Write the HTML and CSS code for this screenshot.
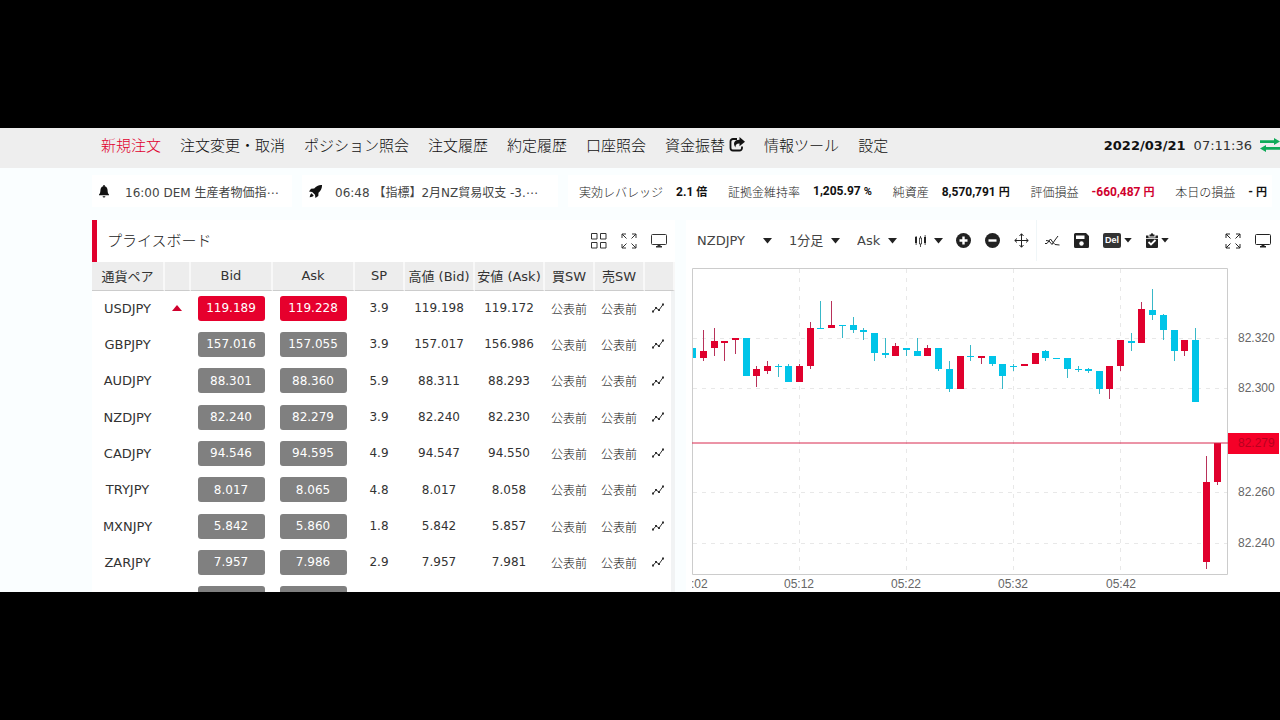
FILE: index.html
```
<!DOCTYPE html>
<html lang="ja">
  <head>
    <meta charset="UTF-8">
    <meta name="viewport" content="width=device-width, initial-scale=1.0">
    <title>プライスボード</title>
    <link rel="stylesheet" href="styles.css">
  </head>
  <body>
    <!-- shared icons -->
    <svg class="sprite" aria-hidden="true">
      <symbol id="caret" viewBox="0 0 9 6"><path d="M0 0h9L4.500 5.500z"/></symbol>
      <symbol id="spark" viewBox="0 0 12 10">
        <path d="M1 8.500L4 5l3 2 4-5.500" fill="none" stroke="currentColor"/>
        <path d="M0 7.500h2v2H0zM3 4h2v2H3zM6 6h2v2H6zM10 .5h2v2h-2z"/>
      </symbol>
      <symbol id="expand" viewBox="0 0 16 16">
        <path d="M1 5V1h4M1 1l4.500 4.500M11 1h4v4M15 1l-4.500 4.500M1 11v4h4M1 15l4.500-4.500M15 11v4h-4M15 15l-4.500-4.500" fill="none" stroke="currentColor"/>
      </symbol>
      <symbol id="monitor" viewBox="0 0 16 14">
        <rect x=".5" y=".5" width="15" height="10" rx="1" fill="none" stroke="currentColor"/>
        <path d="M6.500 11h3v1H11v1.500H5V12h1.500z"/>
      </symbol>
    </svg>

    <header class="topbar">
      <nav class="menu">
        <a class="active" href="#">新規注文</a>
        <a href="#">注文変更・取消</a>
        <a href="#">ポジション照会</a>
        <a href="#">注文履歴</a>
        <a href="#">約定履歴</a>
        <a href="#">口座照会</a>
        <a href="#">資金振替
          <svg width="16" height="15" viewBox="0 0 16 15" aria-hidden="true">
            <path d="M8 2H4a2.500 2.500 0 0 0-2.500 2.500v6.500A2.500 2.500 0 0 0 4 13.500h6.500A2.500 2.500 0 0 0 13 11V9.500" fill="none" stroke="currentColor" stroke-width="1.800"/>
            <path d="M10.500 0L16 4.700l-5.500 4.600V6.600C7.500 6.500 6.500 7.700 6.400 10.500 3.500 6 5.500 2.800 10.500 2.800z"/>
          </svg>
        </a>
        <a href="#">情報ツール</a>
        <a href="#">設定</a>
      </nav>
      <div class="clock">
        <b>2022/03/21</b>
        <span>07:11:36</span>
        <svg class="sync" width="20" height="14" viewBox="0 0 20 14" aria-hidden="true">
          <path d="M0 2.200h14V0l6 3.500L14 7V5H0zM20 9H6V7l-6 3.500L6 14v-2.200h14z"/>
        </svg>
      </div>
    </header>

    <div class="info">
      <a class="news" href="#">
        <svg width="10" height="13" viewBox="0 0 10 13" aria-hidden="true">
          <path d="M4.300 0h1.400v1.200C7.800 1.600 8.500 3.200 8.600 5.500c.1 2 .4 3 1.400 4V10.300H0V9.500c1-1 1.300-2 1.400-4C1.500 3.200 2.200 1.600 4.300 1.200zM3.600 11.200h2.800a1.400 1.400 0 0 1-2.800 0z"/>
        </svg>
        16:00 DEM 生産者物価指⋯
      </a>
      <a class="news news-wide" href="#">
        <svg width="13" height="13" viewBox="0 0 13 13" aria-hidden="true">
          <path d="M13 0c.1 3.500-1 5.500-3.500 7.800L9.300 11 6.400 13 6 9.800 3.200 7 0 6.600 2 3.700l3.200-.2C7.500 1 9.500-.1 13 0zM2.500 8.300l2.200 2.200C4 11.500 2.500 12 .7 12.300 1 10.500 1.500 9 2.500 8.300z"/>
        </svg>
        06:48 【指標】2月NZ貿易収支 -3.⋯
      </a>
      <dl class="account">
        <div><dt>実効レバレッジ</dt><dd>2.1 <small>倍</small></dd></div>
        <div><dt>証拠金維持率</dt><dd>1,205.97 <small>%</small></dd></div>
        <div><dt>純資産</dt><dd>8,570,791 <small>円</small></dd></div>
        <div><dt>評価損益</dt><dd class="loss">-660,487 <small>円</small></dd></div>
        <div><dt>本日の損益</dt><dd>- <small>円</small></dd></div>
      </dl>
    </div>

    <main class="panels">
      <section class="panel board">
        <div class="panel-head">
          <h1>プライスボード</h1>
          <button type="button" aria-label="タイル表示">
            <svg class="line" width="16" height="16" viewBox="0 0 16 16">
              <path d="M.5.5h5.500v5.500H.5zM9.500.5H15v5.500H9.500zM.5 9.500h5.500V15H.5zM9.500 9.500H15V15H9.500z"/>
            </svg>
          </button>
          <button type="button" aria-label="拡大"><svg width="16" height="16"><use href="#expand"/></svg></button>
          <button type="button" aria-label="別画面"><svg width="16" height="14"><use href="#monitor"/></svg></button>
        </div>
        <table class="prices">
          <colgroup>
            <col class="c-pair"><col class="c-arrow"><col class="c-rate"><col class="c-rate"><col class="c-swap">
            <col class="c-high"><col class="c-high"><col class="c-swap"><col class="c-swap"><col class="c-menu">
          </colgroup>
          <thead>
            <tr>
              <th>通貨ペア</th><th></th><th>Bid</th><th>Ask</th><th>SP</th>
              <th>高値 (Bid)</th><th>安値 (Ask)</th><th>買SW</th><th>売SW</th><th></th>
            </tr>
          </thead>
          <tbody>
            <tr class="up">
              <td class="pair">USDJPY</td><td><svg class="arrow" width="10" height="6" viewBox="0 0 10 6"><path d="M5 0l5 6H0z"/></svg></td>
              <td><button type="button" class="rate">119.189</button></td><td><button type="button" class="rate">119.228</button></td>
              <td>3.9</td><td>119.198</td><td>119.172</td><td class="ja">公表前</td><td class="ja">公表前</td>
              <td><svg width="12" height="10"><use href="#spark"/></svg></td>
            </tr>
            <tr>
              <td class="pair">GBPJPY</td><td></td>
              <td><button type="button" class="rate">157.016</button></td><td><button type="button" class="rate">157.055</button></td>
              <td>3.9</td><td>157.017</td><td>156.986</td><td class="ja">公表前</td><td class="ja">公表前</td>
              <td><svg width="12" height="10"><use href="#spark"/></svg></td>
            </tr>
            <tr>
              <td class="pair">AUDJPY</td><td></td>
              <td><button type="button" class="rate">88.301</button></td><td><button type="button" class="rate">88.360</button></td>
              <td>5.9</td><td>88.311</td><td>88.293</td><td class="ja">公表前</td><td class="ja">公表前</td>
              <td><svg width="12" height="10"><use href="#spark"/></svg></td>
            </tr>
            <tr>
              <td class="pair">NZDJPY</td><td></td>
              <td><button type="button" class="rate">82.240</button></td><td><button type="button" class="rate">82.279</button></td>
              <td>3.9</td><td>82.240</td><td>82.230</td><td class="ja">公表前</td><td class="ja">公表前</td>
              <td><svg width="12" height="10"><use href="#spark"/></svg></td>
            </tr>
            <tr>
              <td class="pair">CADJPY</td><td></td>
              <td><button type="button" class="rate">94.546</button></td><td><button type="button" class="rate">94.595</button></td>
              <td>4.9</td><td>94.547</td><td>94.550</td><td class="ja">公表前</td><td class="ja">公表前</td>
              <td><svg width="12" height="10"><use href="#spark"/></svg></td>
            </tr>
            <tr>
              <td class="pair">TRYJPY</td><td></td>
              <td><button type="button" class="rate">8.017</button></td><td><button type="button" class="rate">8.065</button></td>
              <td>4.8</td><td>8.017</td><td>8.058</td><td class="ja">公表前</td><td class="ja">公表前</td>
              <td><svg width="12" height="10"><use href="#spark"/></svg></td>
            </tr>
            <tr>
              <td class="pair">MXNJPY</td><td></td>
              <td><button type="button" class="rate">5.842</button></td><td><button type="button" class="rate">5.860</button></td>
              <td>1.8</td><td>5.842</td><td>5.857</td><td class="ja">公表前</td><td class="ja">公表前</td>
              <td><svg width="12" height="10"><use href="#spark"/></svg></td>
            </tr>
            <tr>
              <td class="pair">ZARJPY</td><td></td>
              <td><button type="button" class="rate">7.957</button></td><td><button type="button" class="rate">7.986</button></td>
              <td>2.9</td><td>7.957</td><td>7.981</td><td class="ja">公表前</td><td class="ja">公表前</td>
              <td><svg width="12" height="10"><use href="#spark"/></svg></td>
            </tr>
            <tr>
              <td></td><td></td>
              <td><button type="button" class="rate"></button></td><td><button type="button" class="rate"></button></td>
              <td></td><td></td><td></td><td></td><td></td><td></td>
            </tr>
          </tbody>
        </table>
      </section>

      <section class="panel chart">
        <div class="toolbar">
          <div class="tools tools-left">
            <label class="drop drop-pair"><select aria-label="通貨ペア"><option>NZDJPY</option></select><svg width="9" height="6"><use href="#caret"/></svg></label>
            <label class="drop"><select aria-label="足種"><option>1分足</option></select><svg width="9" height="6"><use href="#caret"/></svg></label>
            <label class="drop"><select aria-label="価格"><option>Ask</option></select><svg width="9" height="6"><use href="#caret"/></svg></label>
            <button type="button" aria-label="チャート種類">
              <svg width="13" height="12" viewBox="0 0 13 12">
                <path d="M1 2h2v6H1zM10 2h2v6h-2zM1.700 1h.8v9h-.8zM10.700 0h.8v10h-.8z"/>
                <path d="M6.500 1v2M6.500 9v3M5.500 3h2v6h-2z" fill="none" stroke="currentColor" stroke-width=".8"/>
              </svg>
              <svg width="9" height="6"><use href="#caret"/></svg>
            </button>
          </div>
          <div class="tools">
            <button type="button" aria-label="拡大">
              <svg width="15" height="15" viewBox="0 0 15 15"><circle cx="7.500" cy="7.500" r="7.500"/><path d="M7.500 3.500v8M3.500 7.500h8" stroke="#fff" stroke-width="2.400"/></svg>
            </button>
            <button type="button" aria-label="縮小">
              <svg width="15" height="15" viewBox="0 0 15 15"><circle cx="7.500" cy="7.500" r="7.500"/><path d="M3.500 7.500h8" stroke="#fff" stroke-width="2.400"/></svg>
            </button>
            <button type="button" aria-label="十字カーソル">
              <svg class="line" width="15" height="15" viewBox="0 0 15 15"><path d="M7.500 1v13M1 7.500h13M5.500 3l2-2.300 2 2.300M5.500 12l2 2.300 2-2.300M3 5.500L.7 7.500 3 9.500M12 5.500l2.300 2-2.300 2"/></svg>
            </button>
          </div>
          <div class="tools tools-edit">
            <button type="button" aria-label="テクニカル">
              <svg class="line" width="15" height="12" viewBox="0 0 15 12"><path d="M0 8.500h2L5.500 4 8 7.500 10 9.500 14.500 10M1 5.500l3 .5 3 3.500L10 5l3-4"/></svg>
            </button>
            <button type="button" aria-label="保存">
              <svg width="15" height="15" viewBox="0 0 15 15"><path d="M1.500 0H12l3 3v10.500A1.500 1.500 0 0 1 13.500 15h-12A1.500 1.500 0 0 1 0 13.500v-12A1.500 1.500 0 0 1 1.500 0z"/><path d="M2 2.500h8.500v3.500H2z" fill="#fff"/><circle cx="7.500" cy="10.500" r="2.200" fill="#fff"/></svg>
            </button>
            <button type="button">
              <span class="del">Del</span>
              <svg width="8" height="5"><use href="#caret"/></svg>
            </button>
            <button type="button" aria-label="設定">
              <svg width="12" height="15" viewBox="0 0 12 15"><path d="M0 2.500h2.500v2h7v-2H12V14a1 1 0 0 1-1 1H1a1 1 0 0 1-1-1zM3.500 1.500h1.300a1.200 1.200 0 0 1 2.400 0h1.300v2h-5z"/><path d="M0 5.500h12" stroke="#fff" stroke-width=".8"/><path d="M2.500 9l2.500 2.500L9.500 7" fill="none" stroke="#fff" stroke-width="1.800"/></svg>
              <svg width="8" height="5"><use href="#caret"/></svg>
            </button>
          </div>
          <div class="tools tools-right">
            <button type="button" aria-label="拡大"><svg width="16" height="16"><use href="#expand"/></svg></button>
            <button type="button" aria-label="別画面"><svg width="16" height="14"><use href="#monitor"/></svg></button>
          </div>
        </div>

        <svg class="plot" viewBox="0 0 588 324" role="img" aria-label="NZDJPY 1分足">
          <path class="grid" d="M107.500 1v305M214.500 1v305M321.500 1v305M428.500 1v305M1 70.500h534M1 120.500h534M1 224.500h534M1 275.500h534"/>
          <path class="frame" d="M.5.5h535v306H.5z"/>

          <g class="fall">
            <path d="M54.500 70v38M86.500 96v13M96.500 96v18M128.500 33v28M150.500 57v13M161.500 49v16M171.500 60v12M182.500 65v28M193.500 70v20M214.500 80v8M225.500 70v18M246.500 80v23M257.500 93v31M278.500 77v16M300.500 88v10M310.500 96v25M321.500 96v7M353.500 82v11M375.500 90v20M386.500 98v6M396.500 100v5M407.500 103v23M439.500 65v18M460.500 21v31M471.500 46v26M482.500 62v31M503.500 60v74"/>
            <path class="body" d="M1 80h3v10h-3zM51 70h7v38h-7zM83 98h7v1h-7zM93 98h7v16h-7zM125 60h7v1h-7zM147 57h7v1h-7zM158 57h7v5h-7zM168 62h7v2h-7zM179 65h7v20h-7zM190 85h7v2h-7zM211 80h7v2h-7zM222 83h7v5h-7zM243 80h7v21h-7zM254 101h7v20h-7zM275 88h7v1h-7zM297 88h7v8h-7zM307 96h7v12h-7zM318 98h7v1h-7zM350 83h7v7h-7zM361 90h7v1h-7zM372 90h7v11h-7zM383 101h7v1h-7zM393 101h7v2h-7zM404 103h7v18h-7zM436 73h7v2h-7zM457 42h7v5h-7zM468 47h7v15h-7zM479 62h7v21h-7zM500 72h7v62h-7z"/>
          </g>
          <g class="rise">
            <path d="M11.500 62v31M22.500 60v28M32.500 73v20M43.500 70v16M64.500 98v21M75.500 93v13M107.500 96v18M118.500 54v47M139.500 33v27M203.500 75v13M235.500 77v11M268.500 88v33M289.500 88v8M417.500 98v33M428.500 72v31M449.500 34v41M492.500 72v16M514.500 188v113M525.500 175v42"/>
            <path class="body" d="M8 83h7v7h-7zM19 73h7v7h-7zM29 73h7v2h-7zM40 70h7v2h-7zM61 101h7v7h-7zM72 98h7v5h-7zM104 98h7v16h-7zM115 60h7v38h-7zM136 57h7v3h-7zM200 78h7v10h-7zM232 80h7v8h-7zM265 88h7v33h-7zM286 88h7v2h-7zM329 96h7v2h-7zM340 85h7v11h-7zM414 98h7v23h-7zM425 72h7v26h-7zM446 41h7v34h-7zM489 72h7v11h-7zM511 214h7v80h-7zM522 175h7v39h-7z"/>
          </g>

          <path class="last-line" d="M0 175h536"/>
          <rect class="last-tag" x="536" y="165" width="51" height="21"/>
          <g class="axis">
            <text x="546" y="74">82.320</text>
            <text x="546" y="124">82.300</text>
            <text class="last" x="546" y="179">82.279</text>
            <text x="546" y="228">82.260</text>
            <text x="546" y="279">82.240</text>
            <text x="-1" y="320">:02</text>
            <text class="time" x="107" y="320">05:12</text>
            <text class="time" x="214" y="320">05:22</text>
            <text class="time" x="321" y="320">05:32</text>
            <text class="time" x="429" y="320">05:42</text>
          </g>
        </svg>
      </section>
    </main>
  </body>
</html>
```
FILE: styles.css
```
* {
  box-sizing: border-box;
}

body {
  display: flex;
  flex-direction: column;
  height: 100vh;
  margin: 0;
  padding: 128px 0;
  overflow: hidden;
  background-color: #000;
  color: #333;
  font-family: "DejaVu Sans", "Noto Sans CJK JP", sans-serif;
  font-size: 12px;
}

a {
  color: inherit;
  text-decoration: none;
}

svg {
  flex: none;
  fill: currentColor;
}

.line {
  fill: none;
  stroke: currentColor;
}

button {
  padding: 0;
  border: none;
  background: none;
  color: inherit;
  font: inherit;
  cursor: pointer;
}

.sprite {
  display: none;
}

/* top menu */
.topbar {
  display: flex;
  flex: none;
  align-items: center;
  justify-content: space-between;
  height: 40px;
  padding: 0 0 6px 101px;
  background-color: #eee;
  color: #111;
}

.menu {
  display: flex;
  gap: 19px;
  padding-bottom: 2px;
  font-size: 15px;
  font-weight: 300;
  white-space: nowrap;
}

.menu a {
  display: flex;
  align-items: center;
  gap: 4px;
}

.menu .active {
  color: #e0002d;
}

.clock {
  display: flex;
  align-items: center;
  gap: 8px;
  font-size: 13px;
}

.clock span {
  color: #333;
}

.sync {
  color: #0faa58;
}

/* news and account summary */
.info {
  display: flex;
  flex: none;
  gap: 10px;
  height: 52px;
  padding: 7px 8px 13px 92px;
  background-color: #fafeff;
  white-space: nowrap;
}

.news,
.account {
  display: flex;
  align-items: center;
  background-color: #fff;
}

.news {
  gap: 16px;
  width: 200px;
  padding-left: 7px;
  color: #444;
}

.news svg {
  color: #111;
}

.news-wide {
  gap: 13px;
  width: 256px;
}

.account {
  flex: 1;
  justify-content: space-between;
  margin: 0;
  padding: 0 5px 0 11px;
}

.account div {
  display: flex;
  align-items: center;
  gap: 13px;
}

.account dt {
  color: #222;
  font-weight: 300;
}

.account dd {
  margin: 0;
  color: #111;
  font-family: Roboto, "Noto Sans CJK JP", sans-serif;
  font-weight: 700;
}

.account small {
  font-size: 11px;
}

.account .loss {
  color: #d0002d;
}

/* panels */
.panels {
  display: flex;
  flex: 1;
  gap: 11px;
  min-height: 0;
  padding-left: 92px;
  background-color: #fafeff;
}

.panel {
  min-width: 0;
  overflow: hidden;
  background-color: #fff;
}

.board {
  flex: 583;
}

.chart {
  flex: 594;
}

.panel-head {
  display: flex;
  align-items: center;
  gap: 14px;
  height: 42px;
  padding: 0 8px 1px 10px;
  border-left: 5px solid #e0002d;
}

.panel-head h1 {
  flex: 1;
  margin: 0;
  padding-bottom: 3px;
  color: #222;
  font-size: 15px;
  font-weight: 300;
}

.panel-head svg,
.toolbar svg {
  display: block;
}

.prices {
  width: 100%;
  table-layout: fixed;
  border-collapse: separate;
  border-spacing: 0;
  text-align: center;
  white-space: nowrap;
}

.c-pair { width: 73px; }
.c-arrow { width: 26px; }
.c-rate { width: 82px; }
.c-swap { width: 50px; }
.c-high { width: 70px; }
.c-menu { width: 30px; }

.prices th {
  height: 29px;
  padding: 0 0 1px;
  border-right: 2px solid #f8f8f8;
  border-bottom: 1px solid #ccc;
  background-color: #ededed;
  font-size: 13px;
  font-weight: 400;
}

.prices td {
  height: 36px;
  padding: 0 2px 2px 0;
}

.prices tr:nth-child(3n) td {
  height: 37px;
}

.prices td:last-child {
  padding-right: 0;
  border-right: 4px solid #f1f3f4;
}

.prices svg {
  display: block;
  margin: 0 auto;
}

.prices .pair {
  font-size: 13px;
}

.prices .ja {
  color: #111;
  font-weight: 300;
}

.arrow {
  color: #d0002d;
}

.rate {
  display: block;
  width: 67px;
  height: 25px;
  margin: 0 auto;
  border-radius: 3px;
  background-color: #808080;
  color: #fff;
}

.up .rate {
  background-color: #e6002d;
}

/* chart toolbar */
.toolbar {
  display: flex;
  align-items: center;
  height: 42px;
  padding: 0 9px 1px 11px;
  color: #222;
}

.tools {
  display: flex;
  align-items: center;
  gap: 14px;
}

.tools button,
.drop {
  display: flex;
  align-items: center;
  gap: 7px;
}

.tools-left {
  gap: 17px;
  margin-right: 13px;
}

.drop select {
  padding: 0;
  border: none;
  background: none;
  color: #444;
  font: inherit;
  font-size: 13px;
  appearance: none;
}

.drop-pair select {
  width: 59px;
}

.tools-edit {
  height: 41px;
  margin-left: 7px;
  padding-left: 8px;
  border-left: 1px solid #f0f6f8;
}

.tools-edit button {
  gap: 3px;
}

.tools-right {
  margin-left: auto;
}

.del {
  padding: 0 2px;
  border-radius: 2px;
  background-color: #333;
  color: #fff;
  font-family: "Liberation Sans", sans-serif;
  font-size: 9px;
  font-weight: 700;
  line-height: 15px;
}

/* candlestick chart */
.plot {
  display: block;
  width: calc(100% - 6px);
  margin: 6px 0 0 6px;
}

.grid {
  fill: none;
  stroke: #e8e8e8;
  stroke-dasharray: 4 5;
}

.frame {
  fill: none;
  stroke: #ccc;
}

.rise {
  fill: #e0002d;
  stroke: #b8325a;
}

.fall {
  fill: #00c4e8;
  stroke: #38b8c8;
}

.body {
  stroke: none;
}

.last-line {
  stroke: #d8284e;
}

.last-tag {
  fill: #f50028;
}

.axis {
  fill: #666;
  font-family: "Liberation Sans", sans-serif;
  font-size: 12px;
}

.time {
  text-anchor: middle;
}

.last {
  fill: #b8001e;
}
```
